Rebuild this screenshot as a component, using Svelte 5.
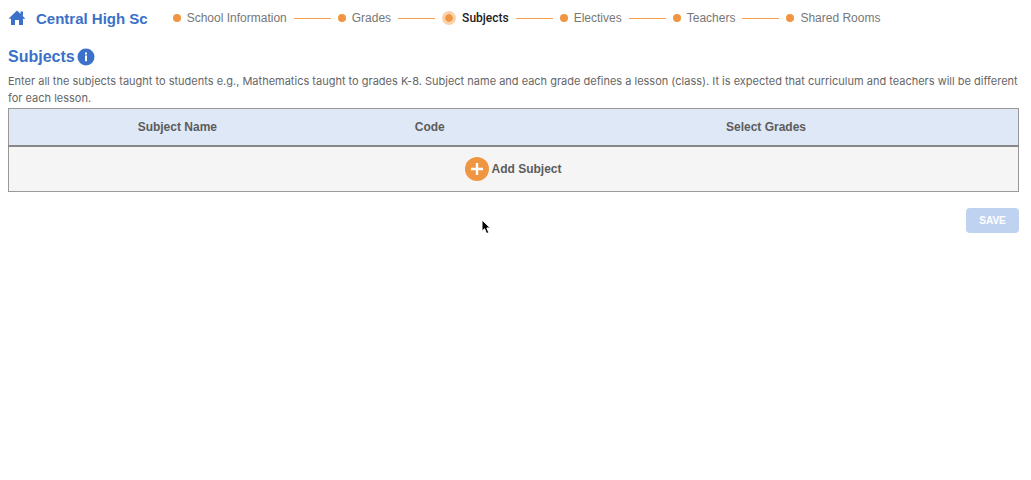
<script>
  const steps = ['School Information', 'Grades', 'Subjects', 'Electives', 'Teachers', 'Shared Rooms'];
  let active = $state('Subjects');
</script>

<div class="page">
  <header>
    <a class="brand" href="#home">
      <svg width="18" height="16" viewBox="0 0 18 16" aria-hidden="true">
        <path d="M9 .5 17.5 8.7H15V15H11V10H7V15H3V8.7H.5ZM12.5 1.5H15V6L12.5 4Z" />
      </svg>
      <span>Central High Sc</span>
    </a>
    <nav aria-label="School setup">
      {#each steps as step, i}
        {#if i > 0}<span class="line"></span>{/if}
        <button
          class="step"
          class:active={step === active}
          aria-current={step === active ? 'step' : undefined}
          onclick={() => (active = step)}
        >
          <span class="dot"></span>{step}
        </button>
      {/each}
    </nav>
  </header>

  <main>
    <h1>
      Subjects
      <svg width="18" height="18" viewBox="0 0 18 18" aria-hidden="true">
        <circle cx="9" cy="9" r="8.5" />
        <path d="M8 4.5h2v2H8ZM8 7.6H10V13.3H8Z" fill="#fff" />
      </svg>
    </h1>
    <p>
      Enter all the subjects taught to students e.g., Mathematics taught to grades K-8. Subject name and
      each grade defines a lesson (class). It is expected that curriculum and teachers will be different
      for each lesson.
    </p>
    <table>
      <thead>
        <tr>
          <th class="name">Subject Name</th>
          <th class="code">Code</th>
          <th>Select Grades</th>
        </tr>
      </thead>
      <tbody>
        <tr>
          <td colspan="3">
            <button class="add">
              <svg width="24" height="24" viewBox="0 0 24 24" aria-hidden="true">
                <circle cx="12" cy="12" r="12" />
                <path d="M12 6v12M6 12h12" stroke="#fff" stroke-width="2.4" />
              </svg>
              <span>Add Subject</span>
            </button>
          </td>
        </tr>
      </tbody>
    </table>
    <div class="actions">
      <button class="save" disabled>SAVE</button>
    </div>
  </main>

  <svg class="pointer" width="11" height="16" viewBox="0 0 11 16" aria-hidden="true">
    <path d="M1 1V12.2L3.6 9.8 5.6 14.6 7.8 13.6 5.8 9H9.3Z" />
  </svg>
</div>

<style>
  :global(body) {
    margin: 0;
    background: #fff;
  }
  .page {
    position: relative;
    padding: 0 12px 0 8px;
    font-family: 'Liberation Sans', Arial, sans-serif;
    font-size: 12px;
    color: #666;
  }
  button {
    padding: 0;
    border: 0;
    background: none;
    font: inherit;
    color: inherit;
  }
  header {
    display: flex;
    align-items: center;
    gap: 25px;
    height: 36px;
  }
  .brand {
    display: flex;
    align-items: center;
    gap: 10px;
    color: #3b71c8;
    font-size: 15px;
    font-weight: bold;
    text-decoration: none;
    white-space: nowrap;
  }
  .brand svg,
  h1 svg {
    fill: #3b71c8;
  }
  nav {
    display: flex;
    align-items: center;
    gap: 7px;
  }
  .step {
    display: flex;
    align-items: center;
    gap: 6px;
    color: #777;
    white-space: nowrap;
  }
  .dot {
    width: 8px;
    height: 8px;
    border-radius: 50%;
    background: #f09642;
  }
  .active {
    color: #222;
    font-family: Roboto, 'Liberation Sans', sans-serif;
    font-weight: 500;
  }
  .active .dot {
    border: 3px solid #fad2aa;
    background-clip: padding-box;
  }
  .line {
    width: 37px;
    height: 1px;
    background: #f3a04e;
  }
  h1 {
    display: flex;
    align-items: center;
    gap: 2px;
    margin: 0;
    padding-top: 10px;
    font-size: 16px;
    line-height: 22px;
    color: #3b71c8;
  }
  p {
    margin: 5px 0 0;
    font-family: Inter, 'Liberation Sans', sans-serif;
    font-size: 11px;
    line-height: 17px;
  }
  table {
    width: 100%;
    margin-top: 1px;
    border-collapse: collapse;
    table-layout: fixed;
    border: 1px solid #999;
  }
  th {
    height: 36px;
    padding: 0;
    background: #dee8f6;
    border-bottom: 2px solid #888;
    color: #5c5c5c;
  }
  .name {
    width: 33.33%;
  }
  .code {
    width: 16.67%;
  }
  td {
    height: 44px;
    padding: 0;
    background: #f5f5f5;
  }
  .add {
    display: flex;
    align-items: center;
    gap: 2px;
    margin: 0 auto;
    font-weight: bold;
    color: #5c5c5c;
  }
  .add svg {
    fill: #f09642;
  }
  .actions {
    display: flex;
    justify-content: flex-end;
    padding-top: 16px;
  }
  .save {
    width: 53px;
    height: 25px;
    border-radius: 4px;
    background: #bfd3f1;
    color: #fff;
    font-size: 10px;
    font-weight: bold;
  }
  .pointer {
    position: absolute;
    left: 481px;
    top: 219px;
    stroke: #fff;
    stroke-width: 1;
  }
</style>
